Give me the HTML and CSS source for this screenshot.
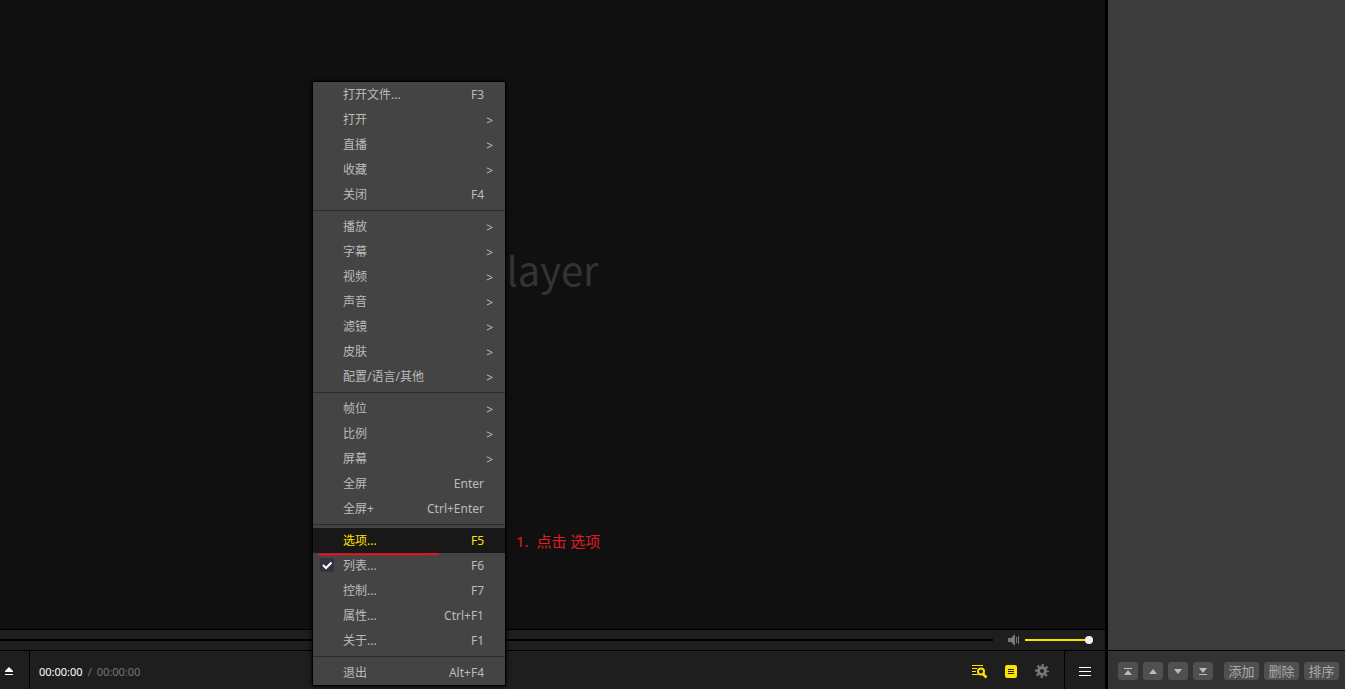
FILE: index.html
```html
<!DOCTYPE html>
<html lang="zh-CN">
<head>
    <meta charset="UTF-8">
    <meta name="viewport" content="width=device-width, initial-scale=1.0">
    <title>Player</title>
    <link rel="stylesheet" href="styles.css">
</head>
<body>

<main class="player">
    <div class="stage">
        <div class="brand">layer</div>
    </div>

    <div class="seek-row">
        <input class="seek" type="range" min="0" max="100" value="0" aria-label="进度">
        <button class="icon-button mute" aria-label="静音">
            <svg width="12" height="12" viewBox="0 0 12 12">
                <path d="M0 4h3l4-4v12L3 8H0z" fill="#777"/>
                <path d="M8.500 3v6M10.500 2v8" stroke="#777" fill="none"/>
            </svg>
        </button>
        <input class="volume" type="range" min="0" max="100" value="98" aria-label="音量">
    </div>

    <div class="control-row">
        <button class="icon-button eject" aria-label="打开">
            <svg width="8" height="8" viewBox="0 0 8 8" fill="#fff">
                <path d="M4 0l4 4v1H0V4z"/>
                <path d="M0 7h8v1H0z"/>
            </svg>
        </button>
        <div class="time">
            <span class="time-now">00:00:00</span>
            <span class="time-slash">/</span>
            <span>00:00:00</span>
        </div>
        <div class="tools">
            <button class="icon-button" aria-label="搜索列表">
                <svg width="16" height="13" viewBox="-1 0 16 13" fill="none" stroke="#ffe100">
                    <path d="M0 .5h11M0 3.500h5M0 6.500h4M0 9.500h6"/>
                    <circle cx="9" cy="6.500" r="3" stroke-width="2"/>
                    <path d="M11 9l3.500 3.500" stroke-width="2.500"/>
                </svg>
            </button>
            <button class="icon-button" aria-label="播放列表">
                <svg width="12" height="13" viewBox="0 0 12 13">
                    <rect width="12" height="13" rx="2" fill="#ffe100"/>
                    <path d="M3 4.500h6M3 6.500h6M3 8.500h6" stroke="#222"/>
                </svg>
            </button>
            <button class="icon-button" aria-label="设置">
                <svg width="14" height="14" viewBox="0 0 14 14" fill="none" stroke="#777">
                    <circle cx="7" cy="7" r="3.500" stroke-width="3"/>
                    <circle cx="7" cy="7" r="5.900" stroke-width="2.200" stroke-dasharray="2.300 2.334" stroke-dashoffset="1.150"/>
                </svg>
            </button>
        </div>
        <button class="icon-button hamburger" aria-label="菜单">
            <svg width="12" height="9" viewBox="0 0 12 9">
                <path d="M0 .5h12M0 4.500h12M0 8.500h12" stroke="#fff"/>
            </svg>
        </button>
    </div>
</main>

<aside class="playlist">
    <div class="playlist-items"></div>
    <div class="playlist-bar">
        <div class="button-group">
            <button class="small-button" aria-label="移到顶部">
                <svg width="8" height="8" viewBox="0 0 8 8"><path d="M0 1h8v1H0zM4 3l4 5H0z"/></svg>
            </button>
            <button class="small-button" aria-label="上移">
                <svg width="8" height="8" viewBox="0 0 8 8"><path d="M4 2l4 5H0z"/></svg>
            </button>
            <button class="small-button" aria-label="下移">
                <svg width="8" height="8" viewBox="0 0 8 8"><path d="M0 2h8l-4 5z"/></svg>
            </button>
            <button class="small-button" aria-label="移到底部">
                <svg width="8" height="8" viewBox="0 0 8 8"><path d="M0 1h8L4 6zM0 7h8v1H0z"/></svg>
            </button>
        </div>
        <div class="button-group">
            <button class="text-button">添加</button>
            <button class="text-button">删除</button>
            <button class="text-button">排序</button>
        </div>
    </div>
</aside>

<!-- Context menu -->
<div class="menu" role="menu">
    <div class="menu-group">
        <button class="menu-item" role="menuitem"><span>打开文件...</span><span class="key">F3</span></button>
        <button class="menu-item" role="menuitem"><span>打开</span><span class="arrow">&gt;</span></button>
        <button class="menu-item" role="menuitem"><span>直播</span><span class="arrow">&gt;</span></button>
        <button class="menu-item" role="menuitem"><span>收藏</span><span class="arrow">&gt;</span></button>
        <button class="menu-item" role="menuitem"><span>关闭</span><span class="key">F4</span></button>
    </div>
    <div class="menu-group">
        <button class="menu-item" role="menuitem"><span>播放</span><span class="arrow">&gt;</span></button>
        <button class="menu-item" role="menuitem"><span>字幕</span><span class="arrow">&gt;</span></button>
        <button class="menu-item" role="menuitem"><span>视频</span><span class="arrow">&gt;</span></button>
        <button class="menu-item" role="menuitem"><span>声音</span><span class="arrow">&gt;</span></button>
        <button class="menu-item" role="menuitem"><span>滤镜</span><span class="arrow">&gt;</span></button>
        <button class="menu-item" role="menuitem"><span>皮肤</span><span class="arrow">&gt;</span></button>
        <button class="menu-item" role="menuitem"><span>配置/语言/其他</span><span class="arrow">&gt;</span></button>
    </div>
    <div class="menu-group">
        <button class="menu-item" role="menuitem"><span>帧位</span><span class="arrow">&gt;</span></button>
        <button class="menu-item" role="menuitem"><span>比例</span><span class="arrow">&gt;</span></button>
        <button class="menu-item" role="menuitem"><span>屏幕</span><span class="arrow">&gt;</span></button>
        <button class="menu-item" role="menuitem"><span>全屏</span><span class="key">Enter</span></button>
        <button class="menu-item" role="menuitem"><span>全屏+</span><span class="key">Ctrl+Enter</span></button>
    </div>
    <div class="menu-group">
        <button class="menu-item active" role="menuitem">
            <span>选项...</span><span class="key">F5</span>
            <svg class="underline" width="121" height="4" viewBox="0 0 121 4">
                <path d="M1 2.500L120 2" stroke="#e81123" stroke-width="2" stroke-linecap="round"/>
            </svg>
            <span class="note">1.&nbsp; 点击 选项</span>
        </button>
        <button class="menu-item" role="menuitemcheckbox" aria-checked="true">
            <svg class="check" width="14" height="14" viewBox="0 0 14 14">
                <rect width="14" height="14" rx="2" fill="#33333f"/>
                <path d="M3 7l3 3 5.500-5.500" fill="none" stroke="#fff" stroke-width="2"/>
            </svg>
            <span>列表...</span><span class="key">F6</span>
        </button>
        <button class="menu-item" role="menuitem"><span>控制...</span><span class="key">F7</span></button>
        <button class="menu-item" role="menuitem"><span>属性...</span><span class="key">Ctrl+F1</span></button>
        <button class="menu-item" role="menuitem"><span>关于...</span><span class="key">F1</span></button>
    </div>
    <div class="menu-group">
        <button class="menu-item" role="menuitem"><span>退出</span><span class="key">Alt+F4</span></button>
    </div>
</div>

</body>
</html>
```
FILE: styles.css
```css
* {
    box-sizing: border-box;
}

body {
    margin: 0;
    display: flex;
    height: 100vh;
    overflow: hidden;
    background-color: #000;
    color: #bbb;
    font-family: "Noto Sans", "Noto Sans CJK SC", sans-serif;
    font-size: 12px;
}

button {
    padding: 0;
    border: none;
    background: none;
    color: inherit;
    font: inherit;
    cursor: pointer;
}

svg {
    display: block;
    overflow: visible;
}

/* Player */
.player {
    flex: 1;
    min-width: 0;
    display: flex;
    flex-direction: column;
    border-right: 3px solid #000;
}

.stage {
    flex: 1;
    display: flex;
    align-items: center;
    justify-content: center;
    padding-bottom: 92px;
    background-color: #101010;
}

.brand {
    color: #333;
    font-family: "Noto Sans CJK SC", sans-serif;
    font-size: 40px;
    line-height: 60px;
}

.seek-row {
    display: flex;
    align-items: center;
    height: 21px;
    padding-right: 11px;
    border-top: 1px solid #000;
    background-color: #1e1e1e;
}

.control-row {
    display: flex;
    height: 39px;
    border-top: 1px solid #000;
    background-color: #1e1e1e;
}

.icon-button {
    display: flex;
    align-items: center;
    justify-content: center;
}

.seek, .volume {
    appearance: none;
    margin: 0;
    height: 2px;
    background: #000;
    outline: none;
}

.seek {
    flex: 1;
    min-width: 0;
}

.seek::-webkit-slider-thumb {
    appearance: none;
    width: 0;
    height: 0;
}

.mute {
    margin: 0 5px 0 15px;
}

.volume {
    width: 69px;
    background: linear-gradient(#ffe100, #ffe100) left / 62px 2px no-repeat #000;
}

.volume::-webkit-slider-thumb {
    appearance: none;
    width: 8px;
    height: 8px;
    border: none;
    border-radius: 50%;
    background: #f0f0f0;
}

.eject {
    width: 30px;
    padding: 2px 12px 0 0;
    border-right: 1px solid #000;
}

.time {
    display: flex;
    align-items: center;
    gap: 5px;
    padding: 2px 0 0 9px;
    color: #777;
    font-size: 11px;
}

.time-now {
    color: #fff;
}

.tools {
    display: flex;
    gap: 18px;
    margin-left: auto;
    padding: 2px 15px 0 0;
}

.hamburger {
    width: 41px;
    padding-top: 3px;
    border-left: 1px solid #000;
}

/* Playlist */
.playlist {
    display: flex;
    flex-direction: column;
    width: 237px;
}

.playlist-items {
    flex: 1;
    background-color: #3c3c3c;
}

.playlist-bar {
    display: flex;
    align-items: center;
    justify-content: space-between;
    height: 39px;
    padding: 2px 6px 0 10px;
    border-top: 1px solid #000;
    background-color: #333;
}

.button-group {
    display: flex;
    gap: 5px;
}

.small-button, .text-button {
    display: flex;
    align-items: center;
    justify-content: center;
    width: 20px;
    height: 18px;
    border-radius: 3px;
    background-color: #505050;
    color: #aaa;
    fill: #bbb;
}

.text-button {
    width: 35px;
    font-size: 13px;
    line-height: 18px;
}

/* Context menu */
.menu {
    position: absolute;
    top: 81px;
    left: 312px;
    width: 194px;
    border: 1px solid #000;
    background-color: #444;
    box-shadow: 0 0 4px #000;
}

.menu-group + .menu-group {
    padding-top: 3px;
}

.menu-group + .menu-group::before {
    content: "";
    display: block;
    height: 1px;
    margin-bottom: 3px;
    background-color: #2a2a30;
}

.menu-item {
    position: relative;
    display: flex;
    align-items: center;
    justify-content: space-between;
    width: 100%;
    height: 25px;
    padding: 0 21px 0 30px;
    line-height: 18px;
    white-space: nowrap;
}

.menu-item.active {
    background-color: #181818;
    color: #ffe100;
}

.arrow {
    margin-right: -9px;
    padding-top: 2px;
}

.check {
    position: absolute;
    left: 7px;
    top: 5px;
}

.underline {
    position: absolute;
    left: 5px;
    top: 24px;
    z-index: 1;
}

/* Step note beside the menu */
.note {
    position: absolute;
    left: 203px;
    top: 2px;
    color: #e01b24;
    font-size: 15px;
    line-height: 22px;
}
```
